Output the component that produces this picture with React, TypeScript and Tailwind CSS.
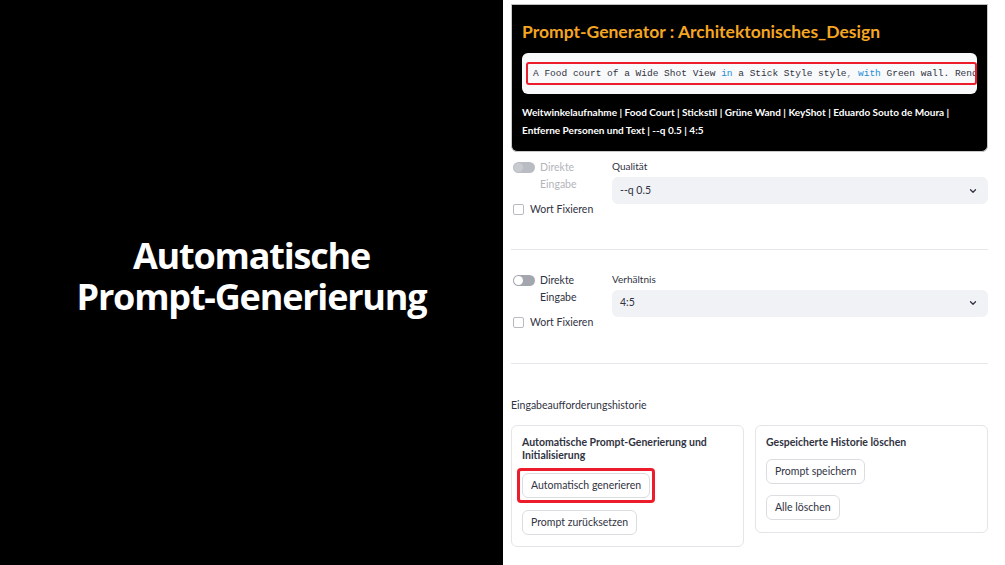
import React from 'react'

const sans = "font-['Lato','Noto_Sans',sans-serif]"

function Toggle({ disabled }: { disabled?: boolean }) {
  return (
    <span
      className={`relative shrink-0 inline-block mt-[3px] w-[22px] h-[11px] rounded-full ${disabled ? 'bg-[#b9bcc2]' : 'bg-[#a3a6ad]'}`}
    >
      <span
        className={`absolute left-[1px] top-[1px] w-[9px] h-[9px] rounded-full ${disabled ? 'bg-[#c8cbd0]' : 'bg-white'}`}
      />
    </span>
  )
}

function Chevron() {
  return (
    <svg width="10" height="10" viewBox="0 0 24 24" fill="none" stroke="#31333f" strokeWidth="3" strokeLinecap="round" strokeLinejoin="round">
      <path d="M6 9l6 6 6-6" />
    </svg>
  )
}

function OptionRow({ label, value, disabled }: { label: string; value: string; disabled?: boolean }) {
  const tone = disabled ? 'text-[#b3b5bb]' : 'text-[#31333f]'
  return (
    <div className="flex">
      <div className="w-[101px] shrink-0 pl-[2px]">
        <div className="flex items-start gap-[5px]">
          <Toggle disabled={disabled} />
          <div className={`text-[10.5px] leading-[17px] ${tone}`}>
            Direkte
            <br />
            Eingabe
          </div>
        </div>
        <label className="flex items-center gap-[6px] mt-[9px] text-[10.5px] text-[#31333f]">
          <span className="inline-block w-[11px] h-[11px] rounded-[2px] border border-[#b8bac0] bg-white" />
          Wort Fixieren
        </label>
      </div>
      <div className="flex-1 min-w-0">
        <div className="text-[10px] leading-[14px] text-[#31333f]">{label}</div>
        <div className="mt-[4px] h-[27px] rounded-[6px] bg-[#f0f2f6] flex items-center justify-between pl-[8px] pr-[10px] text-[10.5px] text-[#31333f]">
          <span>{value}</span>
          <Chevron />
        </div>
      </div>
    </div>
  )
}

function Button({ children, ring }: { children: React.ReactNode; ring?: boolean }) {
  const btn = (
    <span className="inline-flex items-center h-[25px] px-[8px] rounded-[6px] border border-[#dcdde1] bg-white text-[10.5px] text-[#31333f]">
      {children}
    </span>
  )
  if (!ring) return btn
  return <span className="inline-flex p-[2px] -m-[5px] border-[3px] border-[#ec1c2c] rounded-[4px]">{btn}</span>
}

export default function App() {
  return (
    <div className="w-[1005px] h-[565px] flex bg-white overflow-hidden">
      {/* slide title */}
      <div className="w-[503px] shrink-0 bg-black flex items-center justify-center pb-[14px]">
        <h1 className="text-white text-center font-['Open_Sans',sans-serif] font-bold text-[36px] leading-[41px] tracking-[-1.2px]">
          Automatische
          <br />
          Prompt-Generierung
        </h1>
      </div>

      {/* app panel */}
      <div className={`flex-1 min-w-0 pl-[8px] pr-[17px] ${sans}`}>
        <div className="mt-[4px] bg-black border border-[#c9c9c9] border-t-[#bdbdbd] rounded-b-[6px] px-[10px] pt-[16px] pb-[12px]">
          <h2 className="text-[#f5a623] font-bold text-[17.5px] leading-[22px]">
            Prompt-Generator : Architektonisches_Design
          </h2>
          <div className="mt-[10px] h-[41px] rounded-[6px] bg-[#f8f9fb] flex items-center pl-[4px] overflow-hidden">
            <div className="w-full min-w-0 h-[23px] border-[2px] border-[#ec1c2c] rounded-[3px] pl-[5px] overflow-hidden whitespace-pre font-['Liberation_Mono',monospace] text-[9.5px] leading-[19px] text-[#31333f]">
              {'A Food court of a Wide Shot View '}
              <span className="text-[#1a8ed8]">in</span>
              {' a Stick Style style'}
              <span className="text-[#8a8c92]">,</span>
              {' '}
              <span className="text-[#1a8ed8]">with</span>
              {' Green wall. Rendered with KeyShot'}
            </div>
          </div>
          <p className="mt-[9px] text-white text-[10px] leading-[18px] font-bold">
            Weitwinkelaufnahme | Food Court | Stickstil | Grüne Wand | KeyShot | Eduardo Souto de Moura |
            <br />
            Entferne Personen und Text | --q 0.5 | 4:5
          </p>
        </div>

        <div className="mt-[7px]">
          <OptionRow label="Qualität" value="--q 0.5" disabled />
        </div>
        <div className="mt-[31px] h-px bg-[#e6e7ea]" />
        <div className="mt-[22px]">
          <OptionRow label="Verhältnis" value="4:5" />
        </div>
        <div className="mt-[32px] h-px bg-[#e6e7ea]" />

        <div className="mt-[34px] text-[10.5px] text-[#31333f]">Eingabeaufforderungshistorie</div>

        <div className="mt-[12px] grid grid-cols-2 gap-[11px] items-start">
          <div className="border border-[#e4e5e8] rounded-[6px] px-[10px] pt-[10px] pb-[11px]">
            <div className="text-[10.5px] leading-[13px] font-bold text-[#31333f]">
              Automatische Prompt-Generierung und Initialisierung
            </div>
            <div className="mt-[11px] flex flex-col items-start gap-[12px]">
              <Button ring>Automatisch generieren</Button>
              <Button>Prompt zurücksetzen</Button>
            </div>
          </div>
          <div className="border border-[#e4e5e8] rounded-[6px] px-[10px] pt-[10px] pb-[12px]">
            <div className="text-[10.5px] leading-[13px] font-bold text-[#31333f]">
              Gespeicherte Historie löschen
            </div>
            <div className="mt-[10px] flex flex-col items-start gap-[11px]">
              <Button>Prompt speichern</Button>
              <Button>Alle löschen</Button>
            </div>
          </div>
        </div>
      </div>
    </div>
  )
}
